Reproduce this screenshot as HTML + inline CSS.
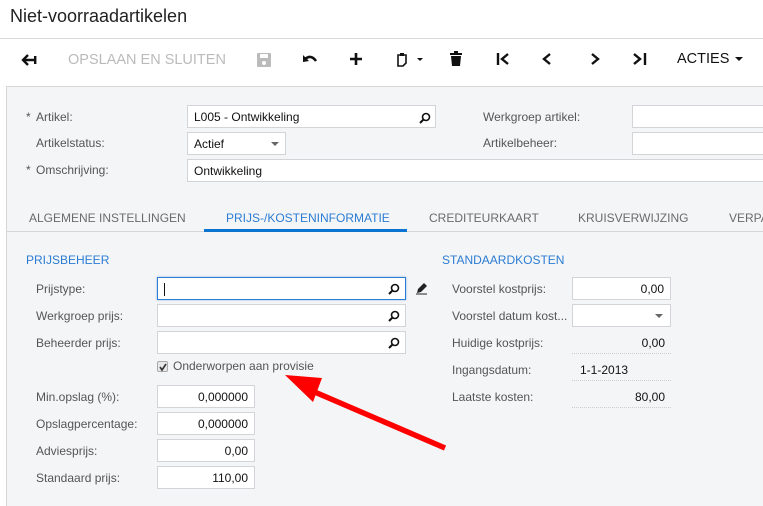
<!DOCTYPE html>
<html><head><meta charset="utf-8"><style>
*{box-sizing:border-box;margin:0;padding:0}
body{width:763px;height:502px;overflow:hidden;background:#fff;font-family:"Liberation Sans",Arial,sans-serif;font-size:12px;color:#333;position:relative}
.a{position:absolute;white-space:nowrap}
.lbl{position:absolute;color:#555;font-size:12px;white-space:nowrap}
.in{position:absolute;background:#fff;border:1px solid #d2d4d7;height:23px;font-size:12px;color:#111;padding:4px 6px;white-space:nowrap}
.r{text-align:right}
.sec{position:absolute;color:#2b7cd3;font-size:12px}
.tab{position:absolute;top:211px;color:#6b6b6b;font-size:12px}
.dot{position:absolute;border-bottom:1px dotted #ccc;height:1px}
svg{position:absolute}
</style></head><body>
<div class="a" style="left:10px;top:6px;font-size:18px;color:#222">Niet-voorraadartikelen</div>
<div class="a" style="left:0;top:38px;width:763px;height:1px;background:#d9d9d9"></div>
<svg style="left:21px;top:53px" width="16" height="14" viewBox="0 0 16 14"><path d="M2 7H14M7 2L2 7L7 12" stroke="#111" stroke-width="2.4" fill="none"/><rect x="13" y="3" width="2.4" height="8" fill="#111"/></svg>
<div class="a" style="left:68px;top:52px;font-size:14.5px;color:#bbb">OPSLAAN EN SLUITEN</div>
<svg style="left:257px;top:53px" width="14" height="14"><rect x="0" y="0" width="14" height="14" rx="1" fill="#bbb"/><rect x="3" y="1" width="8" height="4" fill="#fff"/><circle cx="7" cy="10" r="2" fill="#fff"/></svg>
<svg style="left:302px;top:53px" width="16" height="12"><path d="M3 6Q9 1 14 8" stroke="#111" stroke-width="2.6" fill="none"/><path d="M1 2L1 9L7 8Z" fill="#111"/></svg>
<svg style="left:349px;top:52px" width="14" height="14"><path d="M7 1V13M1 7H13" stroke="#111" stroke-width="2.6"/></svg>
<svg style="left:395px;top:52px" width="30" height="16"><path d="M3 3H11V11L8 14H3Z" stroke="#111" stroke-width="1.6" fill="none"/><rect x="5" y="1" width="4" height="3" fill="#111"/><path d="M22 6L28 6L25 9Z" fill="#111"/></svg>
<svg style="left:449px;top:51px" width="14" height="16"><rect x="1" y="2" width="12" height="2" fill="#111"/><rect x="5" y="0" width="4" height="2" fill="#111"/><path d="M2 5H12L11 15H3Z" fill="#111"/></svg>
<svg style="left:496px;top:52px" width="14" height="14"><path d="M2 1V13" stroke="#111" stroke-width="2.4"/><path d="M12 2L6 7L12 12" stroke="#111" stroke-width="2.4" fill="none"/></svg>
<svg style="left:541px;top:52px" width="12" height="14"><path d="M9 2L3 7L9 12" stroke="#111" stroke-width="2.4" fill="none"/></svg>
<svg style="left:589px;top:52px" width="12" height="14"><path d="M3 2L9 7L3 12" stroke="#111" stroke-width="2.4" fill="none"/></svg>
<svg style="left:632px;top:52px" width="16" height="14"><path d="M2 2L8 7L2 12" stroke="#111" stroke-width="2.4" fill="none"/><path d="M13 1V13" stroke="#111" stroke-width="2.4"/></svg>
<div class="a" style="left:677px;top:51px;font-size:14.5px;color:#111">ACTIES</div>
<svg style="left:735px;top:57px" width="8" height="5"><path d="M0 0H8L4 4Z" fill="#111"/></svg>
<div class="a" style="left:6px;top:86px;width:760px;height:420px;background:#f4f5f7;border-top:1px solid #d6d6d6;border-left:1px solid #d6d6d6"></div>
<div class="lbl" style="left:36px;top:110px"><span style="position:absolute;left:-10px">*</span>Artikel:</div>
<div class="lbl" style="left:36px;top:136px">Artikelstatus:</div>
<div class="lbl" style="left:36px;top:163px"><span style="position:absolute;left:-10px">*</span>Omschrijving:</div>
<div class="in" style="left:187px;top:105px;width:249px">L005 - Ontwikkeling</div>
<svg style="left:419px;top:112px" width="12" height="12"><circle cx="7" cy="5" r="3.5" stroke="#111" stroke-width="1.6" fill="none"/><path d="M4.5 7.5L1 11" stroke="#111" stroke-width="2"/></svg>
<div class="in" style="left:187px;top:132px;width:99px">Actief</div>
<svg style="left:184px;top:142px" width="120" height="5"><path d="M87 0H95L91 4Z" fill="#666"/></svg>
<div class="in" style="left:187px;top:159px;width:590px">Ontwikkeling</div>
<div class="lbl" style="left:483px;top:110px">Werkgroep artikel:</div>
<div class="lbl" style="left:483px;top:136px">Artikelbeheer:</div>
<div class="in" style="left:632px;top:105px;width:140px"></div>
<div class="in" style="left:632px;top:132px;width:140px"></div>
<div class="tab" style="left:29px">ALGEMENE INSTELLINGEN</div>
<div class="tab" style="left:226px;color:#2b7cd3">PRIJS-/KOSTENINFORMATIE</div>
<div class="tab" style="left:429px">CREDITEURKAART</div>
<div class="tab" style="left:578px">KRUISVERWIJZING</div>
<div class="tab" style="left:729px">VERPA</div>
<div class="a" style="left:7px;top:231px;width:760px;height:1px;background:#d6d6d6"></div>
<div class="a" style="left:204px;top:229px;width:203px;height:3px;background:#0a74d0"></div>
<div class="sec" style="left:26px;top:253px">PRIJSBEHEER</div>
<div class="sec" style="left:442px;top:253px">STANDAARDKOSTEN</div>
<div class="lbl" style="left:36px;top:282px">Prijstype:</div>
<div class="lbl" style="left:36px;top:309px">Werkgroep prijs:</div>
<div class="lbl" style="left:36px;top:336px">Beheerder prijs:</div>
<div class="in" style="left:157px;top:277px;width:249px;border-color:#2b7cd3;box-shadow:0 0 2px #8bb7e6"><span style="display:inline-block;width:1px;height:13px;background:#111;vertical-align:middle"></span></div>
<div class="in" style="left:157px;top:304px;width:249px"></div>
<div class="in" style="left:157px;top:331px;width:249px"></div>
<svg style="left:388px;top:283px" width="12" height="12"><circle cx="7" cy="5" r="3.5" stroke="#111" stroke-width="1.6" fill="none"/><path d="M4.5 7.5L1 11" stroke="#111" stroke-width="2"/></svg>
<svg style="left:388px;top:310px" width="12" height="12"><circle cx="7" cy="5" r="3.5" stroke="#111" stroke-width="1.6" fill="none"/><path d="M4.5 7.5L1 11" stroke="#111" stroke-width="2"/></svg>
<svg style="left:388px;top:337px" width="12" height="12"><circle cx="7" cy="5" r="3.5" stroke="#111" stroke-width="1.6" fill="none"/><path d="M4.5 7.5L1 11" stroke="#111" stroke-width="2"/></svg>
<svg style="left:415px;top:282px" width="13" height="13"><path d="M2 11L3 7L9 1L12 4L6 10Z" fill="#222"/><path d="M1 12H12" stroke="#222" stroke-width="1"/></svg>
<div class="a" style="left:157px;top:361px;width:11px;height:11px;border:1px solid #aaa;background:#e8e8e8;border-radius:2px"></div>
<svg style="left:158px;top:362px" width="10" height="10"><path d="M2 5L4 8L8 2" stroke="#333" stroke-width="1.6" fill="none"/></svg>
<div class="lbl" style="left:173px;top:359px">Onderworpen aan provisie</div>
<div class="lbl" style="left:36px;top:390px">Min.opslag (%):</div>
<div class="lbl" style="left:36px;top:417px">Opslagpercentage:</div>
<div class="lbl" style="left:36px;top:444px">Adviesprijs:</div>
<div class="lbl" style="left:36px;top:471px">Standaard prijs:</div>
<div class="in r" style="left:157px;top:385px;width:98px">0,000000</div>
<div class="in r" style="left:157px;top:412px;width:98px">0,000000</div>
<div class="in r" style="left:157px;top:439px;width:98px">0,00</div>
<div class="in r" style="left:157px;top:466px;width:98px">110,00</div>
<div class="lbl" style="left:452px;top:282px">Voorstel kostprijs:</div>
<div class="lbl" style="left:452px;top:309px">Voorstel datum kost...</div>
<div class="lbl" style="left:452px;top:336px">Huidige kostprijs:</div>
<div class="lbl" style="left:452px;top:363px">Ingangsdatum:</div>
<div class="lbl" style="left:452px;top:390px">Laatste kosten:</div>
<div class="in r" style="left:572px;top:277px;width:99px">0,00</div>
<div class="in" style="left:572px;top:304px;width:99px"></div>
<svg style="left:655px;top:314px" width="8" height="5"><path d="M0 0H8L4 4Z" fill="#666"/></svg>
<div class="a" style="left:572px;top:336px;width:93px;text-align:right;color:#111">0,00</div>
<div class="dot" style="left:572px;top:353px;width:99px"></div>
<div class="a" style="left:580px;top:363px;color:#111">1-1-2013</div>
<div class="dot" style="left:572px;top:380px;width:99px"></div>
<div class="a" style="left:572px;top:390px;width:93px;text-align:right;color:#111">80,00</div>
<div class="dot" style="left:572px;top:407px;width:99px"></div>
<svg style="left:0;top:0" width="763" height="502"><path d="M310 390L445 448" stroke="#f00" stroke-width="5.5"/><path d="M285 375L322 378L313 402Z" fill="#f00"/></svg>
</body></html>
